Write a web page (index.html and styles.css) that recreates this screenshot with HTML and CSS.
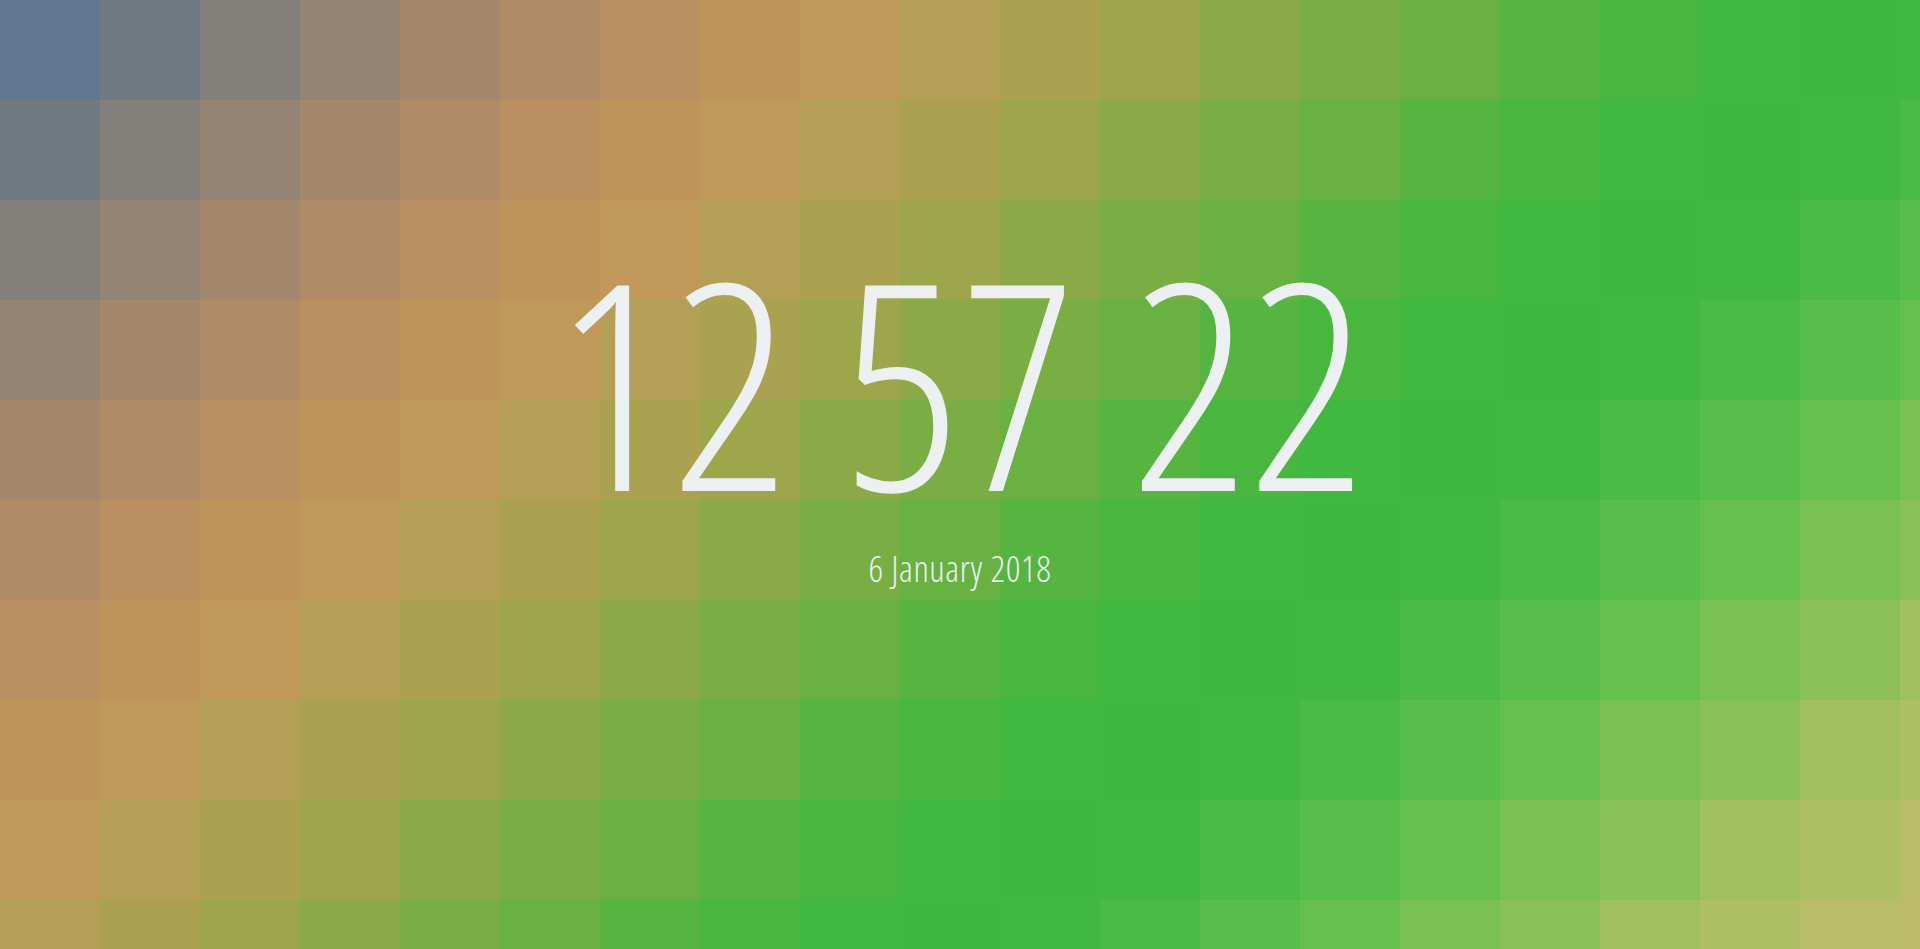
FILE: index.html
```html
<!DOCTYPE html>
<html>
<head>
<meta charset="utf-8">
<link rel="stylesheet" href="styles.css">
</head>
<body>
<div class="bg">
<div class="c d0"></div><div class="c d1"></div><div class="c d2"></div><div class="c d3"></div><div class="c d4"></div><div class="c d5"></div><div class="c d6"></div><div class="c d7"></div><div class="c d8"></div><div class="c d9"></div><div class="c d10"></div><div class="c d11"></div><div class="c d12"></div><div class="c d13"></div><div class="c d14"></div><div class="c d15"></div><div class="c d16"></div><div class="c d17"></div><div class="c d18"></div><div class="c d19"></div>
<div class="c d1"></div><div class="c d2"></div><div class="c d3"></div><div class="c d4"></div><div class="c d5"></div><div class="c d6"></div><div class="c d7"></div><div class="c d8"></div><div class="c d9"></div><div class="c d10"></div><div class="c d11"></div><div class="c d12"></div><div class="c d13"></div><div class="c d14"></div><div class="c d15"></div><div class="c d16"></div><div class="c d17"></div><div class="c d18"></div><div class="c d19"></div><div class="c d20"></div>
<div class="c d2"></div><div class="c d3"></div><div class="c d4"></div><div class="c d5"></div><div class="c d6"></div><div class="c d7"></div><div class="c d8"></div><div class="c d9"></div><div class="c d10"></div><div class="c d11"></div><div class="c d12"></div><div class="c d13"></div><div class="c d14"></div><div class="c d15"></div><div class="c d16"></div><div class="c d17"></div><div class="c d18"></div><div class="c d19"></div><div class="c d20"></div><div class="c d21"></div>
<div class="c d3"></div><div class="c d4"></div><div class="c d5"></div><div class="c d6"></div><div class="c d7"></div><div class="c d8"></div><div class="c d9"></div><div class="c d10"></div><div class="c d11"></div><div class="c d12"></div><div class="c d13"></div><div class="c d14"></div><div class="c d15"></div><div class="c d16"></div><div class="c d17"></div><div class="c d18"></div><div class="c d19"></div><div class="c d20"></div><div class="c d21"></div><div class="c d22"></div>
<div class="c d4"></div><div class="c d5"></div><div class="c d6"></div><div class="c d7"></div><div class="c d8"></div><div class="c d9"></div><div class="c d10"></div><div class="c d11"></div><div class="c d12"></div><div class="c d13"></div><div class="c d14"></div><div class="c d15"></div><div class="c d16"></div><div class="c d17"></div><div class="c d18"></div><div class="c d19"></div><div class="c d20"></div><div class="c d21"></div><div class="c d22"></div><div class="c d23"></div>
<div class="c d5"></div><div class="c d6"></div><div class="c d7"></div><div class="c d8"></div><div class="c d9"></div><div class="c d10"></div><div class="c d11"></div><div class="c d12"></div><div class="c d13"></div><div class="c d14"></div><div class="c d15"></div><div class="c d16"></div><div class="c d17"></div><div class="c d18"></div><div class="c d19"></div><div class="c d20"></div><div class="c d21"></div><div class="c d22"></div><div class="c d23"></div><div class="c d24"></div>
<div class="c d6"></div><div class="c d7"></div><div class="c d8"></div><div class="c d9"></div><div class="c d10"></div><div class="c d11"></div><div class="c d12"></div><div class="c d13"></div><div class="c d14"></div><div class="c d15"></div><div class="c d16"></div><div class="c d17"></div><div class="c d18"></div><div class="c d19"></div><div class="c d20"></div><div class="c d21"></div><div class="c d22"></div><div class="c d23"></div><div class="c d24"></div><div class="c d25"></div>
<div class="c d7"></div><div class="c d8"></div><div class="c d9"></div><div class="c d10"></div><div class="c d11"></div><div class="c d12"></div><div class="c d13"></div><div class="c d14"></div><div class="c d15"></div><div class="c d16"></div><div class="c d17"></div><div class="c d18"></div><div class="c d19"></div><div class="c d20"></div><div class="c d21"></div><div class="c d22"></div><div class="c d23"></div><div class="c d24"></div><div class="c d25"></div><div class="c d26"></div>
<div class="c d8"></div><div class="c d9"></div><div class="c d10"></div><div class="c d11"></div><div class="c d12"></div><div class="c d13"></div><div class="c d14"></div><div class="c d15"></div><div class="c d16"></div><div class="c d17"></div><div class="c d18"></div><div class="c d19"></div><div class="c d20"></div><div class="c d21"></div><div class="c d22"></div><div class="c d23"></div><div class="c d24"></div><div class="c d25"></div><div class="c d26"></div><div class="c d27"></div>
<div class="c d9"></div><div class="c d10"></div><div class="c d11"></div><div class="c d12"></div><div class="c d13"></div><div class="c d14"></div><div class="c d15"></div><div class="c d16"></div><div class="c d17"></div><div class="c d18"></div><div class="c d19"></div><div class="c d20"></div><div class="c d21"></div><div class="c d22"></div><div class="c d23"></div><div class="c d24"></div><div class="c d25"></div><div class="c d26"></div><div class="c d27"></div><div class="c d28"></div>
</div>
<main class="clock">
  <div class="time">12 57 22</div>
  <div class="date">6 January 2018</div>
</main>
</body>
</html>
```
FILE: styles.css
```css
html, body {
  margin: 0;
  padding: 0;
  width: 100%;
  height: 100%;
  overflow: hidden;
}
body {
  position: relative;
  font-family: "Open Sans", "Liberation Sans", sans-serif;
  color: #ecf0f1;
}
.bg {
  position: absolute;
  inset: 0;
  display: grid;
  grid-template-columns: repeat(20, 100px);
  grid-auto-rows: 100px;
  overflow: hidden;
}
.c { width: 100px; height: 100px; }
.d0 { background: #5f7791; }
.d1 { background: #6f7a81; }
.d2 { background: #837f7a; }
.d3 { background: #948474; }
.d4 { background: #a3886e; }
.d5 { background: #b08b68; }
.d6 { background: #ba9062; }
.d7 { background: #c0955c; }
.d8 { background: #c0985a; }
.d9 { background: #b49f56; }
.d10 { background: #aaa250; }
.d11 { background: #9ea64b; }
.d12 { background: #8ca947; }
.d13 { background: #7aae45; }
.d14 { background: #68b142; }
.d15 { background: #56b441; }
.d16 { background: #49b73f; }
.d17 { background: #41b83f; }
.d18 { background: #3fb83f; }
.d19 { background: #41b841; }
.d20 { background: #49bb46; }
.d21 { background: #57be4b; }
.d22 { background: #65c04e; }
.d23 { background: #79c152; }
.d24 { background: #8bc056; }
.d25 { background: #9fc05c; }
.d26 { background: #afbf64; }
.d27 { background: #b9bc69; }
.d28 { background: #bdbb6a; }

.clock {
  position: relative;
  display: flex;
  flex-direction: column;
  align-items: center;
  padding-top: 235px;
}
.time {
  font-size: 288px;
  line-height: 1;
  font-weight: 300;
  font-stretch: 75%;
  white-space: pre;
}
.date {
  margin-top: 28px;
  font-size: 36px;
  line-height: 1;
  font-weight: 300;
  font-stretch: 75%;
  letter-spacing: 0.6px;
}
```
